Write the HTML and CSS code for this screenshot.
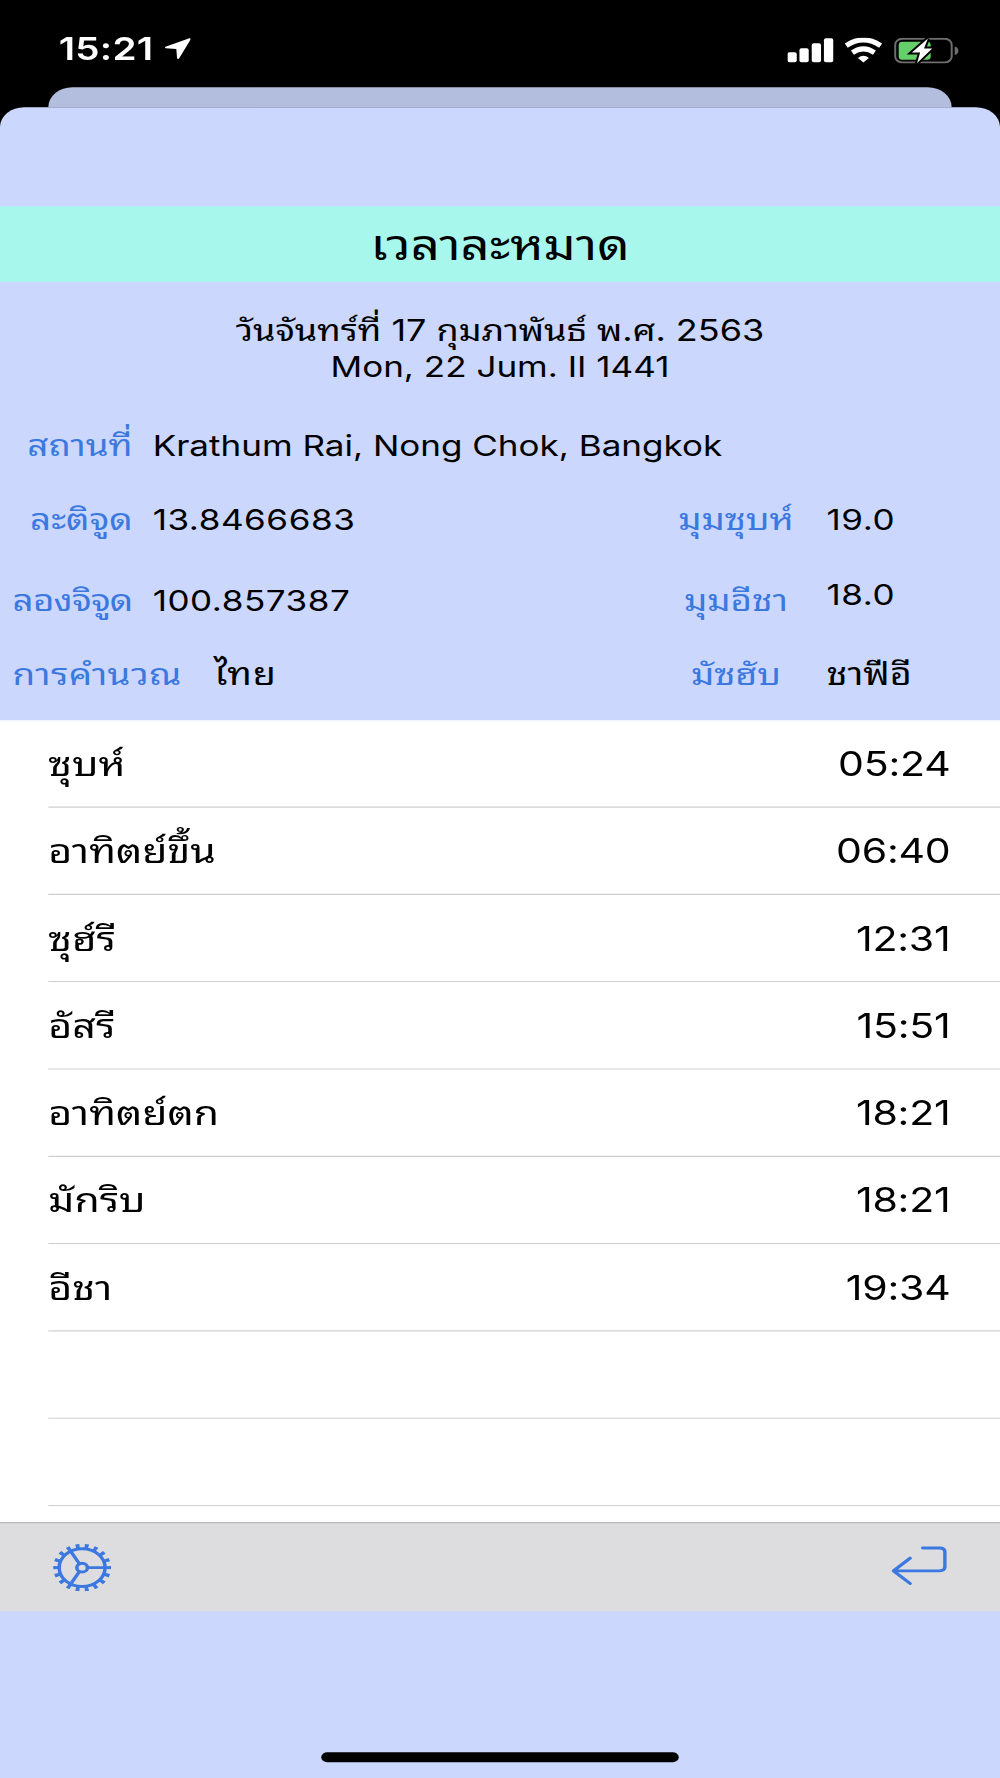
FILE: index.html
```
<!DOCTYPE html>
<html lang="th">
<head>
    <meta charset="UTF-8">
    <meta name="viewport" content="width=device-width, initial-scale=1.0">
    <title>เวลาละหมาด</title>
    <link rel="stylesheet" href="styles.css">
</head>
<body>
    <div class="screen">
        <header class="status">
            <span class="clock">15:21</span>
            <svg class="location" viewBox="0 0 11 11">
                <path d="M10.4 0.3 L0.5 4.6 Q0 5 0.6 5.3 L5 5.7 L5.3 10.3 Q5.7 11 6.2 10.4 L10.9 0.9 Q11 0.2 10.4 0.3 Z"/>
            </svg>
            <svg class="signals" viewBox="0 0 172 26" preserveAspectRatio="none">
                <rect x="0" y="14.5" width="9.3" height="10" rx="2"/>
                <rect x="12" y="10.5" width="9.3" height="14" rx="2"/>
                <rect x="24.3" y="5.5" width="9.3" height="19" rx="2"/>
                <rect x="36.5" y="0.5" width="9.3" height="24" rx="2"/>
                <g class="wifi">
                    <path d="M58.8 8 Q76 -3.6 93.2 8"/>
                    <path d="M65 15 Q76 7.4 87 15"/>
                </g>
                <path d="M70.5 20.2 Q76 16 81.5 20.2 L76 24.9 Z"/>
                <rect class="shell" x="107.8" y="1.1" width="56.5" height="23.6" rx="7" ry="6"/>
                <path class="nub" d="M167.3 8.8 Q171 9.5 171 13 Q171 16.5 167.3 17.2 Z"/>
                <rect class="charge" x="111.3" y="4" width="32" height="18" rx="3.5"/>
                <path class="bolt" d="M140.5 0.8 L124.5 14.8 L132.7 14.8 L129.7 25.2 L144.8 10.8 L136.6 10.8 Z"/>
            </svg>
        </header>
        <div class="back-card"></div>
        <main class="card">
            <h1>เวลาละหมาด</h1>
            <div class="date">
                <p class="thai-date">วันจันทร์ที่ 17 กุมภาพันธ์ พ.ศ. 2563</p>
                <p class="hijri-date">Mon, 22 Jum. II 1441</p>
            </div>
            <section class="info">
                <div class="place row">
                    <span class="label">สถานที่</span>
                    <span class="value">Krathum Rai, Nong Chok, Bangkok</span>
                </div>
                <div class="latitude row">
                    <span class="label">ละติจูด</span>
                    <span class="value number">13.8466683</span>
                    <span class="label angle">มุมซุบห์</span>
                    <span class="value number">19.0</span>
                </div>
                <div class="longitude row">
                    <span class="label">ลองจิจูด</span>
                    <span class="value number">100.857387</span>
                    <span class="label angle">มุมอีชา</span>
                    <span class="value number raised">18.0</span>
                </div>
                <div class="method row">
                    <span class="label">การคำนวณ</span>
                    <span class="value">ไทย</span>
                    <span class="label angle">มัซฮับ</span>
                    <span class="value">ชาฟีอี</span>
                </div>
            </section>
            <ul class="times">
                <li><span class="prayer">ซุบห์</span><span class="time">05:24</span></li>
                <li><span class="prayer">อาทิตย์ขึ้น</span><span class="time">06:40</span></li>
                <li><span class="prayer">ซุฮ์รี</span><span class="time">12:31</span></li>
                <li><span class="prayer">อัสรี</span><span class="time">15:51</span></li>
                <li><span class="prayer">อาทิตย์ตก</span><span class="time">18:21</span></li>
                <li><span class="prayer">มักริบ</span><span class="time">18:21</span></li>
                <li><span class="prayer">อีชา</span><span class="time">19:34</span></li>
                <li></li>
                <li></li>
            </ul>
            <nav class="toolbar">
                <svg class="gear" viewBox="-12 -12 24 24">
                    <circle class="teeth" r="10.9" pathLength="18"/>
                    <circle r="9.5"/>
                    <circle r="2.2"/>
                    <path d="M2.2 0 H9.5 M-1.1 -1.9 L-4.75 -8.23 M-1.1 1.9 L-4.75 8.23"/>
                </svg>
                <svg class="back" viewBox="0 0 23 20">
                    <path d="M13 1.1 H20 Q22.2 1.1 22.2 3.2 V10.6 Q22.2 12.6 20 12.6 H1 M7.8 6.2 L0.9 12.6 L7.8 19"/>
                </svg>
            </nav>
            <div class="home-bar"></div>
        </main>
    </div>
</body>
</html>
```

FILE: styles.css
```
* {
    box-sizing: border-box;
}
body {
    margin: 0;
    width: 1000px;
    height: 1778px;
    overflow: hidden;
    background-color: #000;
    font-family: Inter, "Noto Sans Thai Looped", "Noto Sans Thai", "Noto Sans", sans-serif;
}
h1, p, ul {
    margin: 0;
    padding: 0;
}
/* 414x896 points, stretched to fill the window */
.screen {
    display: flex;
    flex-direction: column;
    width: 414px;
    height: 896px;
    transform: scale(2.41546, 1.98438);
    transform-origin: 0 0;
    font-size: 14.5px;
    color: #000;
}
.status {
    display: flex;
    height: 44px;
    padding: 14.5px 17px 0 24.3px;
    color: #fff;
}
.clock {
    margin-top: -0.3px;
    font-size: 16px;
    line-height: 20px;
    font-weight: 600;
    letter-spacing: 0.1px;
}
.location {
    width: 11px;
    height: 11px;
    margin: 4.8px 0 0 4.2px;
    fill: #fff;
}
.signals {
    width: 71.2px;
    height: 13.1px;
    margin: 4px 0 0 auto;
    fill: #fff;
}
.wifi {
    fill: none;
    stroke: #fff;
    stroke-width: 5.2;
}
.shell {
    fill: none;
    stroke: #6d6d6d;
    stroke-width: 2;
}
.nub {
    fill: #6d6d6d;
}
.charge {
    fill: #65cf69;
}
.bolt {
    stroke: #000;
    stroke-width: 4;
    paint-order: stroke;
}
.back-card {
    height: 10px;
    margin: 0 20px;
    background: #b3bedf;
    border-radius: 10px 10px 0 0;
}
.card {
    display: flex;
    flex-direction: column;
    height: 842px;
    padding-top: 50px;
    background: #cbd7fd;
    border-radius: 10px 10px 0 0;
}
h1 {
    height: 38.3px;
    background: #a7f7ec;
    font-size: 21px;
    line-height: 39px;
    font-weight: 400;
    text-align: center;
}
.date {
    height: 68.7px;
    padding-top: 16.5px;
    line-height: 17.2px;
    text-align: center;
}
.thai-date {
    font-size: 14.9px;
}
.info {
    height: 152px;
}
.row {
    display: flex;
    height: 38px;
    line-height: 20px;
}
.place {
    padding-top: 4px;
}
.latitude {
    padding-top: 3px;
}
.longitude {
    padding-top: 5.7px;
}
.method {
    padding-top: 4.6px;
}
.label {
    width: 54.9px;
    color: #3b78e0;
    font-size: 15.2px;
    text-align: right;
    white-space: nowrap;
}
.value {
    margin-left: 8.3px;
    width: 100px;
    white-space: nowrap;
}
.number {
    letter-spacing: 0.23px;
}
.longitude .label:first-child {
    letter-spacing: -0.3px;
}
.label.angle {
    width: 80px;
    margin-left: 101.5px;
    text-align: center;
}
.angle + .value {
    margin-left: -2.5px;
    width: 60px;
}
.method .label:first-child {
    width: 75.3px;
    letter-spacing: 0.2px;
}
.method .value {
    font-size: 15.6px;
}
.method .value:nth-child(2) {
    margin-left: 13.3px;
    width: 74.6px;
    letter-spacing: 0.3px;
}
.raised {
    margin-top: -2.2px;
}
.times {
    height: 404.5px;
    overflow: hidden;
    background: #fff;
    list-style: none;
    font-size: 17px;
}
.times li {
    display: flex;
    justify-content: space-between;
    height: 44px;
    margin-left: 20px;
    padding-right: 20.5px;
    box-shadow: inset 0 -0.6px #cfcfd1;
    line-height: 44.4px;
}
.time {
    letter-spacing: -0.1px;
}
.toolbar {
    display: flex;
    justify-content: space-between;
    align-items: center;
    height: 44.5px;
    padding: 0 22.2px 0 21.7px;
    background: #dddddf;
    box-shadow: inset 0 0.6px #b9b9bb;
}
.toolbar svg {
    fill: none;
    stroke: #3b78e0;
    stroke-width: 1.45;
    stroke-linecap: round;
    stroke-linejoin: round;
}
.gear {
    width: 24px;
    height: 24px;
}
.gear .teeth {
    stroke-width: 2.2;
    stroke-linecap: butt;
    stroke-dasharray: 0.42 0.58;
    stroke-dashoffset: 0.21;
}
.back {
    width: 23px;
    height: 20px;
    margin-bottom: 1px;
}
.home-bar {
    width: 148px;
    height: 5px;
    margin: auto auto 8px;
    background: #000;
    border-radius: 2.5px;
}
```
